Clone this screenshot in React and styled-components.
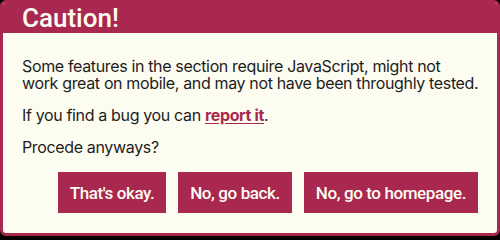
import React from "react";
import styled, { createGlobalStyle } from "styled-components";

const Global = createGlobalStyle`
  html, body { margin: 0; padding: 0; background: #000; }
  #root { width: 500px; height: 236px; }
`;

const crimson = "#a9284f";

const Dialog = styled.div`
  box-sizing: border-box;
  width: 500px;
  height: 236px;
  border: 3px solid ${crimson};
  border-radius: 6px;
  background: #fdfcf1;
  display: flex;
  flex-direction: column;
  overflow: hidden;
`;

const Header = styled.header`
  background: ${crimson};
  height: 30px;
  padding: 0 19px;
  display: flex;
  align-items: center;
`;

const Title = styled.h1`
  margin: 0;
  font-family: Roboto, "Liberation Sans", sans-serif;
  font-weight: 500;
  font-size: 26px;
  line-height: 30px;
  color: #fdfcf1;
`;

const Body = styled.div`
  padding: 10px 19px 20px;
  display: flex;
  flex-direction: column;
  flex: 1;
`;

const Para = styled.p`
  margin: 15px 0 0;
  font-family: Inter, "Liberation Sans", sans-serif;
  font-size: 16px;
  letter-spacing: -0.35px;
  line-height: 17px;
  white-space: nowrap;
  color: #1d1d1d;
`;

const Link = styled.a`
  color: ${crimson};
  font-weight: 700;
  text-decoration: underline;
  text-underline-offset: 2px;
`;

const Actions = styled.div`
  margin-top: auto;
  display: flex;
  justify-content: flex-end;
  gap: 12px;
`;

const Button = styled.button`
  border: 0;
  border-radius: 0;
  background: ${crimson};
  color: #fdfcf1;
  font-family: Roboto, "Liberation Sans", sans-serif;
  font-weight: 500;
  font-size: 17px;
  letter-spacing: -0.4px;
  height: 41px;
  padding: 0 12px;
  cursor: pointer;
`;

export default function App() {
  return (
    <>
      <Global />
      <Dialog>
        <Header>
          <Title>Caution!</Title>
        </Header>
        <Body>
          <Para>
            Some features in the section require JavaScript, might not
            <br />
            work great on mobile, and may not have been throughly tested.
          </Para>
          <Para>
            If you find a bug you can <Link href="#">report it</Link>.
          </Para>
          <Para>Procede anyways?</Para>
          <Actions>
            <Button>That's okay.</Button>
            <Button>No, go back.</Button>
            <Button>No, go to homepage.</Button>
          </Actions>
        </Body>
      </Dialog>
    </>
  );
}
